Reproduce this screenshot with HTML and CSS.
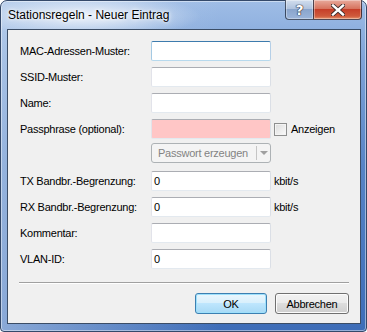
FILE: index.html
```html
<!DOCTYPE html>
<html lang="de">
<head>
    <meta charset="UTF-8">
    <title>Stationsregeln - Neuer Eintrag</title>
    <link rel="stylesheet" href="styles.css">
</head>
<body>
    <div class="window">
        <div class="titlebar">
            <span class="title">Stationsregeln - Neuer Eintrag</span>
            <div class="caption-buttons">
                <span class="cap-help">?</span>
                <span class="cap-close">
                    <svg width="14" height="12" viewBox="0 0 14 12">
                        <path d="M2 1.5 L12 10.5 M12 1.5 L2 10.5" stroke="#3a2a2a" stroke-width="4.2" stroke-linecap="square"/>
                        <path d="M2 1.5 L12 10.5 M12 1.5 L2 10.5" stroke="#fff" stroke-width="2.4" stroke-linecap="square"/>
                    </svg>
                </span>
            </div>
        </div>

        <div class="client">
            <div class="form">
                <div class="row">
                    <label>MAC-Adressen-Muster:</label>
                    <div class="field focused"></div>
                </div>
                <div class="row">
                    <label>SSID-Muster:</label>
                    <div class="field"></div>
                </div>
                <div class="row">
                    <label>Name:</label>
                    <div class="field"></div>
                </div>
                <div class="row">
                    <label>Passphrase (optional):</label>
                    <div class="field invalid"></div>
                    <div class="extra">
                        <span class="checkbox"></span>
                        <span>Anzeigen</span>
                    </div>
                </div>
                <div class="row gen-row">
                    <span></span>
                    <div class="split-button">
                        <span class="split-label">Passwort erzeugen</span>
                        <span class="split-arrow"></span>
                    </div>
                </div>
                <div class="row">
                    <label>TX Bandbr.-Begrenzung:</label>
                    <div class="field">0</div>
                    <div class="extra">kbit/s</div>
                </div>
                <div class="row">
                    <label>RX Bandbr.-Begrenzung:</label>
                    <div class="field">0</div>
                    <div class="extra">kbit/s</div>
                </div>
                <div class="row">
                    <label>Kommentar:</label>
                    <div class="field"></div>
                </div>
                <div class="row">
                    <label>VLAN-ID:</label>
                    <div class="field">0</div>
                </div>
            </div>

            <div class="separator"></div>

            <div class="actions">
                <button class="btn default">OK</button>
                <button class="btn cancel">Abbrechen</button>
            </div>
        </div>
    </div>
</body>
</html>
```

FILE: styles.css
```css
body {
    margin: 0;
    background-color: #fff;
    font-family: "Liberation Sans", Arial, sans-serif;
}

/* window frame */
.window {
    box-sizing: border-box;
    width: 367px;
    height: 332px;
    display: flex;
    flex-direction: column;
    padding: 0 5px 7px 6px;
    border: 1px solid #34496a;
    border-radius: 7px 7px 4px 4px;
    background:
        radial-gradient(ellipse 115px 22px at 85px 15px, rgba(255, 255, 255, 0.8), rgba(255, 255, 255, 0) 100%),
        linear-gradient(to right, rgba(200, 218, 240, 0.55) 0%, rgba(200, 218, 240, 0) 60%),
        linear-gradient(to bottom, #9fbde6 0%, #7ea3d8 18%, #5784c6 50%, #3e6db8 100%);
    box-shadow: inset 0 0 0 1px rgba(255, 255, 255, 0.45);
}

.titlebar {
    height: 28px;
    display: flex;
    justify-content: space-between;
    align-items: flex-start;
}

.title {
    padding: 6px 0 0 1px;
    font-size: 12px;
    line-height: 16px;
    color: #000;
    text-shadow: 0 0 6px #fff, 0 0 3px #fff;
}

.caption-buttons {
    display: flex;
    margin-top: -1px;
    margin-right: -1px;
}

.cap-help,
.cap-close {
    box-sizing: border-box;
    height: 20px;
    display: flex;
    align-items: center;
    justify-content: center;
    border: 1px solid rgba(30, 40, 60, 0.75);
    border-top: none;
    box-shadow: inset 0 0 0 1px rgba(255, 255, 255, 0.35);
}

.cap-help {
    width: 28px;
    border-right: none;
    border-radius: 0 0 0 4px;
    background: linear-gradient(to bottom, #d2deee 0%, #b0c3de 45%, #8aa5cc 50%, #9bb5da 100%);
    font-family: "DejaVu Sans", sans-serif;
    font-weight: bold;
    font-size: 14px;
    color: #fff;
    text-shadow: 0 0 1px #223, 0 0 1px #223, 0 0 1px #223;
}

.cap-close {
    width: 49px;
    border-radius: 0 0 4px 0;
    background: linear-gradient(to bottom, #e8aa9c 0%, #d7745f 45%, #c63f29 50%, #cf5a3c 85%, #e4936c 100%);
}

/* client area */
.client {
    flex: 1;
    display: flex;
    flex-direction: column;
    padding: 11px 11px 9px 12px;
    border: 1px solid #3b4d66;
    background-color: #f0f0f0;
    font-size: 11px;
    letter-spacing: -0.25px;
    color: #000;
}

.form {
    display: flex;
    flex-direction: column;
    gap: 6px;
}

.row {
    display: grid;
    grid-template-columns: 131px 120px auto;
    align-items: center;
    height: 20px;
}

.gen-row {
    margin: -2px 0 2px;
}

.field {
    box-sizing: border-box;
    height: 20px;
    padding-left: 2px;
    line-height: 18px;
    background-color: #fff;
    border: 1px solid;
    border-color: #abadb3 #dbdfe6 #e3e9ef #e2e3ea;
    border-radius: 2px;
}

.field.focused {
    border-color: #3d7bad #b5cfe7 #b7d9ed #a4c9e3;
}

.field.invalid {
    background-color: #ffc6c6;
}

.extra {
    display: flex;
    align-items: center;
    padding-left: 3px;
}

.checkbox {
    box-sizing: border-box;
    width: 13px;
    height: 13px;
    margin-right: 4px;
    border: 1px solid #8e8f8f;
    background: linear-gradient(135deg, #dcdcdc, #fbfbfb);
    box-shadow: inset 0 0 0 1px #f4f4f4;
}

.split-button {
    box-sizing: border-box;
    height: 20px;
    display: flex;
    align-items: stretch;
    border: 1px solid #adb2b5;
    border-radius: 3px;
    background-color: #f4f4f4;
    color: #838383;
}

.split-label {
    flex: 1;
    margin: 2px 0;
    padding-left: 6px;
    line-height: 14px;
    border-right: 1px solid #c5c5c5;
}

.split-arrow {
    width: 13px;
    display: flex;
    align-items: center;
    justify-content: center;
}

.split-arrow::before {
    content: "";
    border-left: 4px solid transparent;
    border-right: 4px solid transparent;
    border-top: 4px solid #a0a0a0;
}

.separator {
    margin: 13px 0 0 -1px;
    border-top: 1px solid #a0a0a0;
    border-bottom: 1px solid #fff;
}

.actions {
    display: flex;
    justify-content: flex-end;
    gap: 8px;
    margin-top: 9px;
}

.btn {
    height: 21px;
    padding: 0;
    font-family: "Liberation Sans", Arial, sans-serif;
    font-size: 11px;
    letter-spacing: -0.25px;
    color: #000;
    border-radius: 3px;
}

.btn.default {
    width: 72px;
    border: 1px solid #3c7fb1;
    background: linear-gradient(to bottom, #eaf6fd 0%, #d9f0fc 45%, #bee6fd 50%, #a7d9f5 100%);
    box-shadow: inset 0 0 0 1px #9ee0fb;
}

.btn.cancel {
    width: 74px;
    border: 1px solid #707070;
    background: linear-gradient(to bottom, #f2f2f2 0%, #ebebeb 45%, #dddddd 50%, #cfcfcf 100%);
    box-shadow: inset 0 0 0 1px #fcfcfc;
}
```
